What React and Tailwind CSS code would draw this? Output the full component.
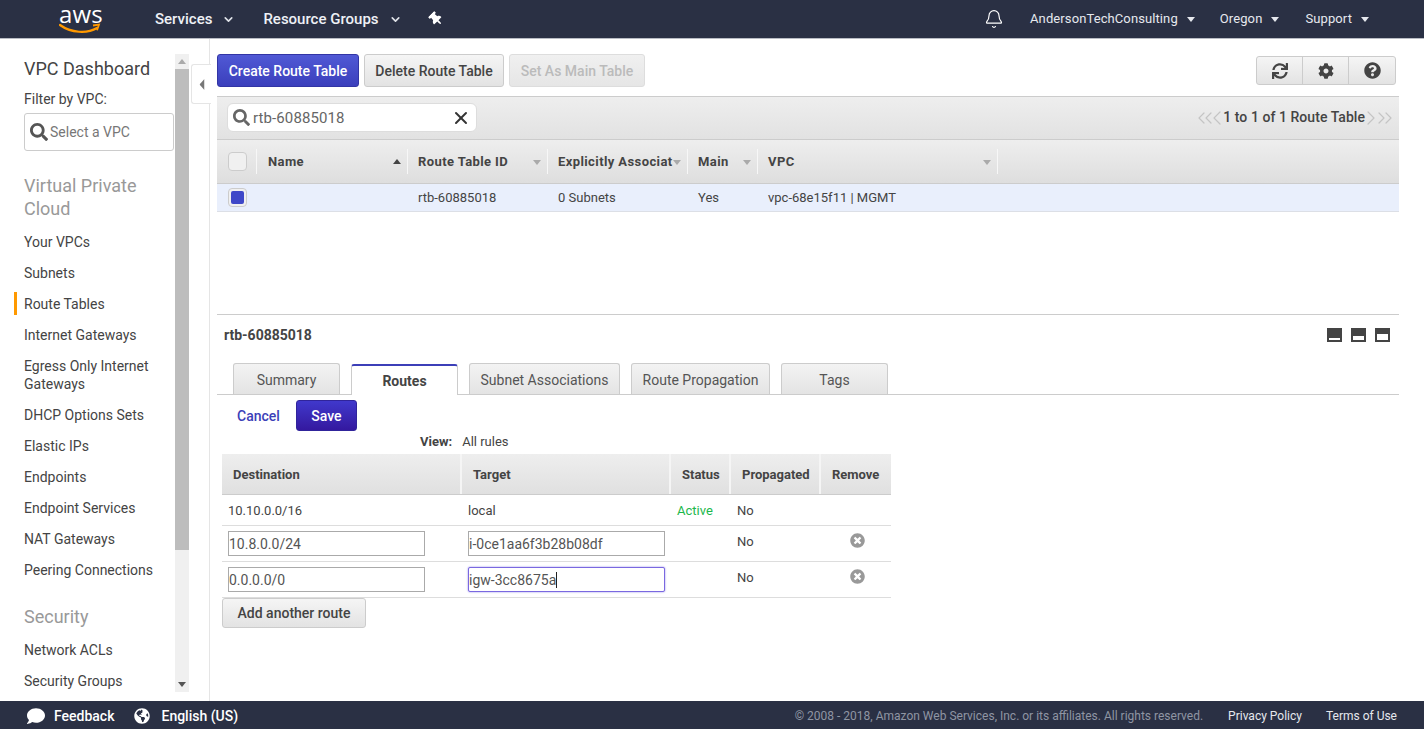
import React from "react";
import { FaSync, FaCog, FaQuestionCircle, FaSearch, FaComment, FaGlobeAmericas, FaTimesCircle, FaThumbtack } from "react-icons/fa";
import { Bell, ChevronDown, ChevronLeft, ChevronRight, ChevronsLeft, ChevronsRight, X } from "lucide-react";

const Caret = ({ className = "" }) => (
  <svg width="8" height="5" viewBox="0 0 8 5" className={className}>
    <path d="M0 0h8L4 5z" fill="currentColor" />
  </svg>
);

const TopBar = () => (
  <header className="h-[39px] shrink-0 flex items-center bg-[#2a3044] border-b border-[#b9bcc4] text-white">
    <div className="w-[48px] ml-[59px] flex flex-col">
      <span className="block mt-[-3px] mb-[-4px] text-[24px] leading-[26px] tracking-[0.2px] font-['Open_Sans',sans-serif] text-white">aws</span>
      <svg width="42" height="11" viewBox="0 0 42 11">
        <path d="M1 2c11 8 27 9 37 3" fill="none" stroke="#f90" strokeWidth="2.2" strokeLinecap="round" />
        <path d="M34 2.5l6-.8-2 5.5" fill="none" stroke="#f90" strokeWidth="1.8" />
      </svg>
    </div>
    <span className="ml-[48px] text-[15px] font-medium text-[#eef1f6]">Services</span>
    <ChevronDown size={13} strokeWidth={3} className="ml-[10px] text-[#dfe2e8]" />
    <span className="ml-[28px] text-[15px] font-medium text-[#eef1f6]">Resource Groups</span>
    <ChevronDown size={13} strokeWidth={3} className="ml-[10px] text-[#dfe2e8]" />
    <FaThumbtack size={14} className="ml-[27px] -rotate-45" />
    <div className="ml-auto flex items-center text-[13px] text-[#e6e8ee] tracking-[0.1px]">
      <Bell size={20} strokeWidth={1.4} className="text-white" />
      <span className="ml-[26px]">AndersonTechConsulting</span>
      <Caret className="ml-[9px]" />
      <span className="ml-[25px]">Oregon</span>
      <Caret className="ml-[9px]" />
      <span className="ml-[26px]">Support</span>
      <Caret className="ml-[9px] mr-[55px]" />
    </div>
  </header>
);

const NavLink = ({ label, active }) => (
  <div className="relative min-h-[31px] flex items-center text-[14px] leading-[18px] text-[#444]">
    {active && <span className="absolute left-[-10px] top-[4px] h-[23px] w-[3px] bg-[#f90]" />}
    <span>{label}</span>
  </div>
);

const Sidebar = () => (
  <aside className="relative w-[210px] shrink-0 flex pt-[15px] pb-[9px] border-r border-[#e5e5e5]">
    <div className="w-[175px] pl-[24px] pr-[1px] overflow-hidden">
      <div className="text-[18px] leading-[30px] text-[#444]">VPC Dashboard</div>
      <div className="mt-[5px] text-[14px] leading-[20px] text-[#444]">Filter by VPC:</div>
      <div className="mt-[4px] h-[38px] flex items-center border border-[#ccc] rounded-[3px] pl-[5px] text-[14px] text-[#777]">
        <FaSearch size={18} className="text-[#555]" />
        <span className="ml-[2px]">Select a VPC</span>
      </div>
      <div className="mt-[23px] text-[18px] leading-[23px] text-[#999]">Virtual Private Cloud</div>
      <div className="mt-[6px]">
        <NavLink label="Your VPCs" />
        <NavLink label="Subnets" />
        <NavLink label="Route Tables" active />
        <NavLink label="Internet Gateways" />
        <div className="pt-[7px] pb-[6px] text-[14px] leading-[18px] text-[#444]">Egress Only Internet Gateways</div>
        <NavLink label="DHCP Options Sets" />
        <NavLink label="Elastic IPs" />
        <NavLink label="Endpoints" />
        <NavLink label="Endpoint Services" />
        <NavLink label="NAT Gateways" />
        <NavLink label="Peering Connections" />
      </div>
      <div className="mt-[20px] text-[18px] leading-[23px] text-[#999]">Security</div>
      <div className="mt-[6px]">
        <NavLink label="Network ACLs" />
        <NavLink label="Security Groups" />
      </div>
    </div>
    <div className="w-[14px] flex flex-col bg-[#f0f0f0] text-[#777]">
      <div className="h-[15px] flex items-center justify-center"><Caret className="rotate-180 text-[#aaa]" /></div>
      <div className="h-[481px] bg-[#bdbdbd]" />
      <div className="flex-1 flex items-end justify-center pb-[5px]"><Caret className="text-[#555]" /></div>
    </div>
    <button className="absolute left-[191px] top-[25px] w-[20px] h-[40px] bg-white border border-[#e5e5e5] border-r-0 rounded-l-[3px] flex items-center justify-center text-[#777]">
      <Caret className="rotate-90 scale-x-[1.4]" />
    </button>
  </aside>
);

const ToolButton = ({ children, className = "" }) => (
  <button className={`h-[33px] pt-[1px] rounded-[3px] border text-[14px] font-medium ${className}`}>{children}</button>
);

const Toolbar = () => (
  <div className="h-[33px] flex items-center">
    <ToolButton className="w-[142px] text-white bg-gradient-to-b from-[#5059d5] to-[#3b3fbc] border-[#3235a5]">Create Route Table</ToolButton>
    <ToolButton className="ml-[5px] w-[140px] text-[#444] bg-gradient-to-b from-[#f5f5f5] to-[#e3e3e3] border-[#ccc]">Delete Route Table</ToolButton>
    <ToolButton className="ml-[5px] w-[136px] text-[#bbb] bg-gradient-to-b from-[#f0f0f0] to-[#e6e6e6] border-[#ddd]">Set As Main Table</ToolButton>
    <div className="ml-auto mr-[3px] h-[29px] flex rounded-[3px] border border-[#ccc] bg-gradient-to-b from-[#f5f5f5] to-[#e3e3e3] text-[#444]">
      <div className="w-[46px] flex items-center justify-center border-r border-[#ccc]"><FaSync size={16} /></div>
      <div className="w-[46px] flex items-center justify-center border-r border-[#ccc]"><FaCog size={16} /></div>
      <div className="w-[46px] flex items-center justify-center"><FaQuestionCircle size={17} /></div>
    </div>
  </div>
);

const FilterBar = () => (
  <div className="mt-[9px] h-[44px] flex items-center bg-gradient-to-b from-[#eeeeee] to-[#e2e2e2] border-t border-[#ccc] border-b">
    <div className="ml-[10px] -mt-[1px] w-[250px] h-[29px] flex items-center bg-white border border-[#ddd] rounded-[6px] pl-[5px] pr-[5px]">
      <FaSearch size={17} className="text-[#666]" />
      <span className="ml-[3px] pt-[1px] text-[15px] text-[#666] tracking-[0.1px]">rtb-60885018</span>
      <X size={20} strokeWidth={2.4} className="ml-auto text-[#333]" />
    </div>
    <div className="ml-auto mr-[2px] -mt-[1px] flex items-center text-[14px] font-medium text-[#444]">
      <ChevronsLeft size={24} strokeWidth={1.2} className="text-[#c4c4c4] -mr-[12px]" />
      <ChevronLeft size={24} strokeWidth={1.2} className="text-[#c4c4c4] -mr-[6px]" />
      <span className="tracking-[0.05px]">1 to 1 of 1 Route Table</span>
      <ChevronRight size={24} strokeWidth={1.2} className="text-[#c4c4c4] -ml-[6px]" />
      <ChevronsRight size={24} strokeWidth={1.2} className="text-[#c4c4c4] -ml-[10px]" />
    </div>
  </div>
);

const columns = [
  { label: "Name", width: "w-[151px]", pad: "pl-[11px]", up: true },
  { label: "Route Table ID", width: "w-[140px]", pad: "pl-[10px]" },
  { label: "Explicitly Associat", width: "w-[140px]", pad: "pl-[10px]" },
  { label: "Main", width: "w-[70px]", pad: "pl-[10px]" },
  { label: "VPC", width: "w-[240px]", pad: "pl-[10px]" },
];

const RouteTableList = () => (
  <div>
    <div className="h-[44px] flex items-center bg-gradient-to-b from-[#eeeeee] to-[#dedede] border-b border-[#ccc] text-[13px] font-bold text-[#444] tracking-[0.4px]">
      <div className="w-[39px] pl-[11px] flex items-center">
        <span className="block w-[19px] h-[19px] rounded-[4px] border border-[#ccc] bg-[#f0f0f0]" />
      </div>
      {columns.map((col) => (
        <div key={col.label} className={`relative h-[25px] flex items-center border-l border-[#f7f7f7] whitespace-nowrap ${col.width} ${col.pad}`}>
          <span>{col.label}</span>
          {col.up
            ? <Caret className="absolute right-[6px] top-[10px] rotate-180 text-[#444]" />
            : <Caret className="absolute right-[6px] top-[11px] text-[#aaa]" />}
        </div>
      ))}
      <div className="h-[25px] border-l border-[#f7f7f7]" />
    </div>
    <div className="h-[28px] flex items-center bg-[#e9effc] border-b border-[#dcdfe6] text-[13px] text-[#444]">
      <div className="w-[190px] pl-[11px] flex items-center">
        <span className="flex items-center justify-center w-[19px] h-[19px] rounded-[4px] border border-[#ccc] bg-[#f0f0f0]">
          <span className="block w-[13px] h-[13px] rounded-[2px] bg-[#3f48c8]" />
        </span>
      </div>
      <span className="ml-[11px] w-[140px]">rtb-60885018</span>
      <span className="w-[140px]">0 Subnets</span>
      <span className="w-[70px]">Yes</span>
      <span>vpc-68e15f11 | MGMT</span>
    </div>
  </div>
);

const PaneIcon = ({ barHeight }) => (
  <div className="w-[15px] h-[14px] flex items-end bg-[#444] px-[2px] pb-[2px]">
    <div className={`w-full bg-white ${barHeight}`} />
  </div>
);

const Tab = ({ label, active, width }) => (
  <div className={`h-[31px] flex items-center justify-center rounded-t-[3px] text-[14px] ${width} ${active
    ? "relative top-[1px] pt-[1px] bg-white border border-[#ccc] border-b-0 border-t-2 border-t-[#3c3fb8] font-bold text-[#444]"
    : "pt-[2px] bg-gradient-to-b from-[#f3f3f3] to-[#e4e4e4] border border-[#ccc] border-b-0 text-[#555]"}`}>
    {label}
  </div>
);

const Th = ({ label, width, last }) => (
  <div className={`flex items-center pl-[11px] pt-[1px] ${width} ${last ? "" : "border-r-2 border-[#f5f5f5]"}`}>{label}</div>
);

const TextBox = ({ value, focused }) => (
  <div className={`w-[197px] h-[25px] flex items-center pt-[1px] bg-white text-[14px] text-[#555] ${focused
    ? "border border-[#7a68e0] rounded-[2px] shadow-[0_0_2px_#8f80e8]"
    : "border border-[#aaa]"}`}>
    {value}
    {focused && <span className="inline-block w-px h-[16px] bg-[#222]" />}
  </div>
);

const EditRow = ({ destination, target, focused }) => (
  <div className="h-[36px] flex items-center border-b border-[#ddd] text-[13px] text-[#444]">
    <div className="w-[240px] pl-[6px]"><TextBox value={destination} /></div>
    <div className="w-[209px] pl-[6px]"><TextBox value={target} focused={focused} /></div>
    <div className="w-[60px]" />
    <div className="w-[90px] pl-[6px] -mt-[3px]">No</div>
    <div className="w-[70px] flex justify-center pl-[2px] -mt-[6px]"><FaTimesCircle size={15} className="text-[#999]" /></div>
  </div>
);

const RoutesEditor = () => (
  <div className="pl-[5px]">
    <div className="w-[669px] h-[41px] flex bg-gradient-to-b from-[#eeeeee] to-[#e0e0e0] border-b border-[#ccc] text-[13px] font-bold text-[#444]">
      <Th label="Destination" width="w-[240px]" />
      <Th label="Target" width="w-[209px]" />
      <Th label="Status" width="w-[60px]" />
      <Th label="Propagated" width="w-[90px]" />
      <Th label="Remove" width="w-[70px]" last />
    </div>
    <div className="w-[669px]">
      <div className="h-[31px] pt-[1px] flex items-center border-b border-[#ddd] text-[13px] text-[#444]">
        <span className="w-[240px] pl-[6px]">10.10.0.0/16</span>
        <span className="w-[209px] pl-[6px]">local</span>
        <span className="w-[60px] pl-[6px] text-[#1cb74c]">Active</span>
        <span className="pl-[6px]">No</span>
      </div>
      <EditRow destination="10.8.0.0/24" target="i-0ce1aa6f3b28b08df" />
      <EditRow destination="0.0.0.0/0" target="igw-3cc8675a" focused />
    </div>
    <button className="w-[144px] h-[30px] rounded-[3px] border border-[#ccc] bg-gradient-to-b from-[#f5f5f5] to-[#e3e3e3] text-[14px] font-medium text-[#444]">Add another route</button>
  </div>
);

const DetailPane = () => (
  <div className="mt-[102px] border-t border-[#ccc]">
    <div className="h-[40px] flex items-center">
      <span className="ml-[7px] text-[14px] font-bold text-[#444]">rtb-60885018</span>
      <div className="ml-auto mr-[9px] flex gap-[9px]">
        <PaneIcon barHeight="h-[2px]" />
        <PaneIcon barHeight="h-[4px]" />
        <PaneIcon barHeight="h-[6px]" />
      </div>
    </div>
    <div className="mt-[8px] flex items-end gap-[11px] pl-[16px] border-b border-[#ccc]">
      <Tab label="Summary" width="w-[107px]" />
      <Tab label="Routes" width="w-[107px]" active />
      <Tab label="Subnet Associations" width="w-[151px]" />
      <Tab label="Route Propagation" width="w-[139px]" />
      <Tab label="Tags" width="w-[107px]" />
    </div>
    <div className="mt-[5px] flex items-center h-[31px] pl-[20px]">
      <span className="pt-[1px] text-[14px] font-medium text-[#3c3fb8]">Cancel</span>
      <button className="ml-[16px] w-[61px] h-[31px] pt-[1px] rounded-[3px] border border-[#30249b] bg-gradient-to-b from-[#4038cc] to-[#34189f] text-[14px] font-medium text-white">Save</button>
    </div>
    <div className="h-[23px] pb-[2px] flex items-center pl-[203px] text-[13px] text-[#444]">
      <span className="font-bold">View:</span>
      <span className="ml-[10px]">All rules</span>
    </div>
    <RoutesEditor />
  </div>
);

const Footer = () => (
  <footer className="h-[28px] shrink-0 pt-[2px] flex items-center bg-[#2a3044] text-white">
    <FaComment size={18} className="ml-[27px]" />
    <span className="ml-[9px] text-[14px] font-medium">Feedback</span>
    <FaGlobeAmericas size={16} className="ml-[20px]" />
    <span className="ml-[11px] text-[14px] font-medium">English (US)</span>
    <span className="ml-auto text-[12px] text-[#8f95a3]">© 2008 - 2018, Amazon Web Services, Inc. or its affiliates. All rights reserved.</span>
    <span className="ml-[25px] text-[12px] text-[#e6e8ee]">Privacy Policy</span>
    <span className="ml-[24px] mr-[27px] text-[12px] text-[#e6e8ee]">Terms of Use</span>
  </footer>
);

export default function App() {
  return (
    <div className="h-[729px] w-[1424px] overflow-hidden flex flex-col bg-white font-['Roboto',sans-serif]">
      <TopBar />
      <div className="flex-1 flex min-h-0">
        <Sidebar />
        <main className="w-[1182px] ml-[7px] pt-[15px]">
          <Toolbar />
          <FilterBar />
          <RouteTableList />
          <DetailPane />
        </main>
      </div>
      <Footer />
    </div>
  );
}
